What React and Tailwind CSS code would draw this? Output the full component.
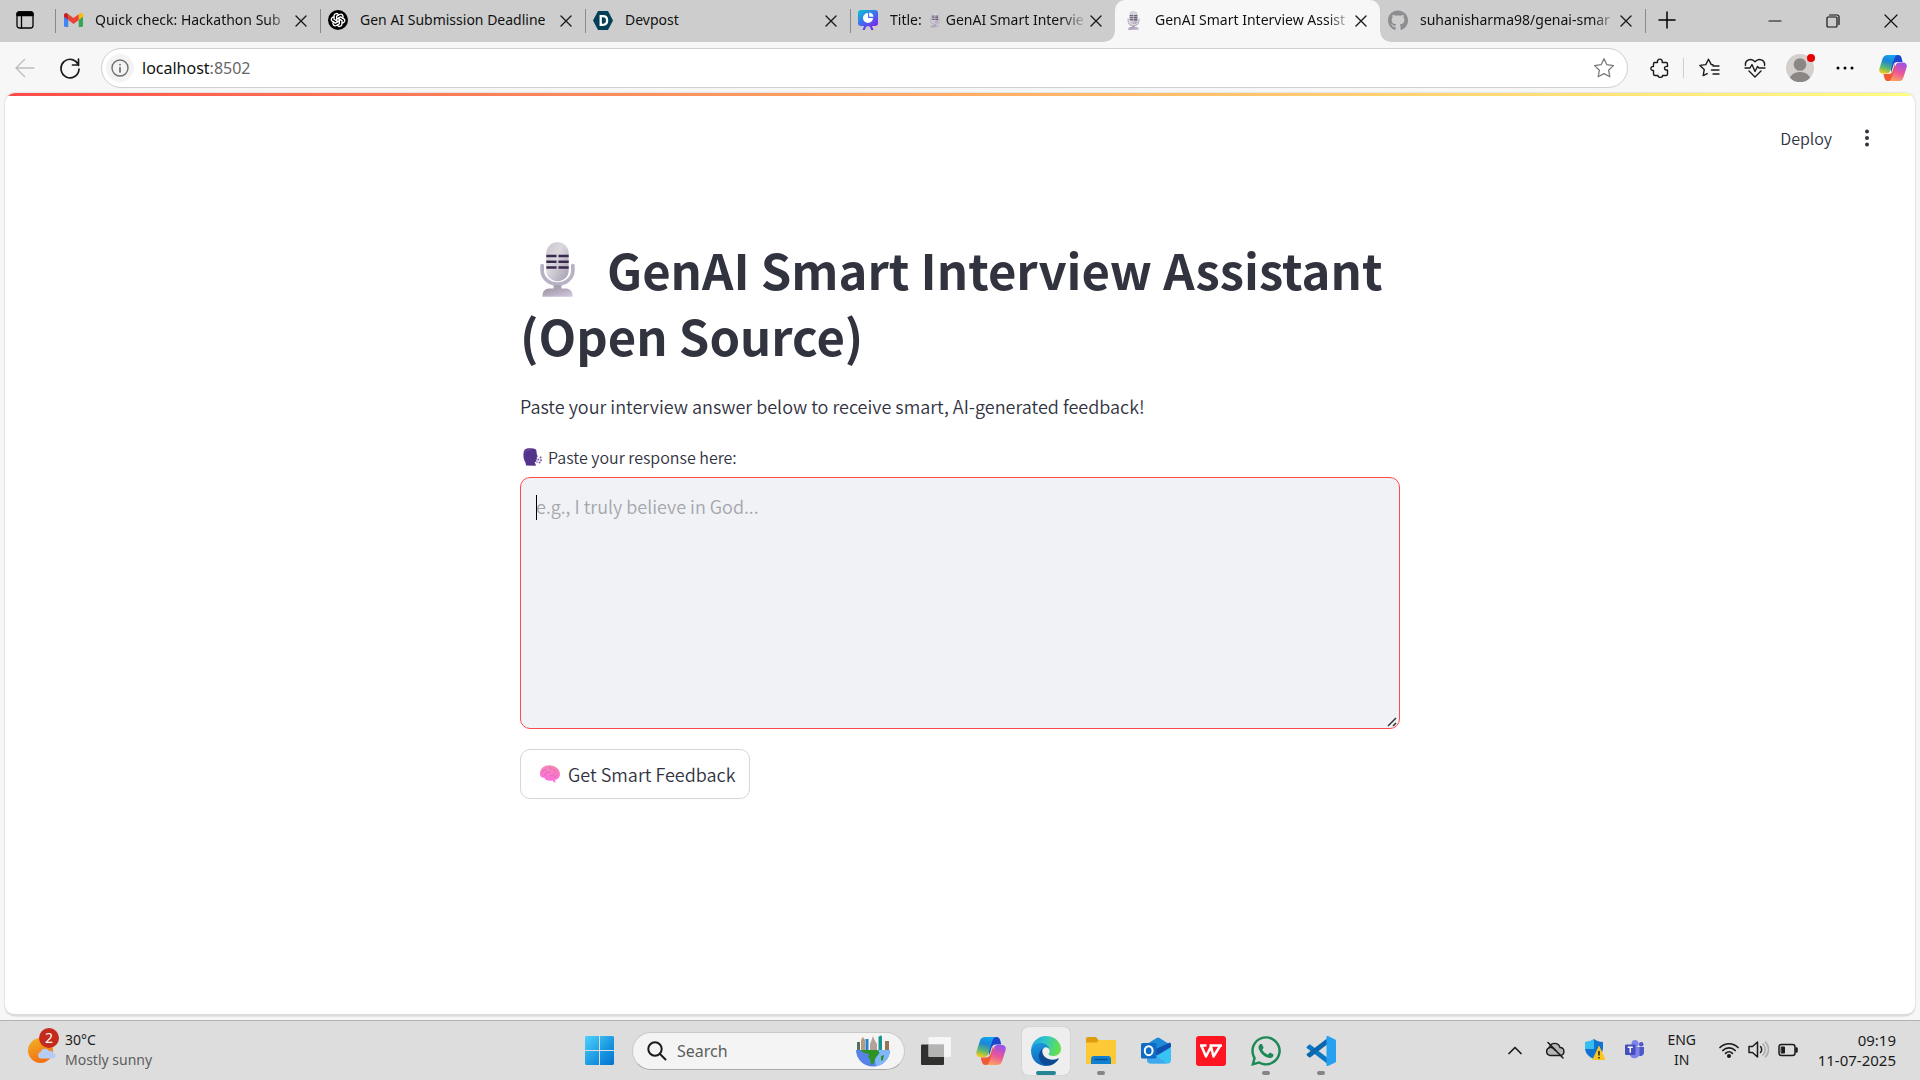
import { useId } from "react";
import { FaGithub, FaWhatsapp } from "react-icons/fa";
import { TbBrandOpenai } from "react-icons/tb";

function Line({ d, size = 20, box = 20, width = 1.3, className = "", children }) {
  return (
    <svg width={size} height={size} viewBox={`0 0 ${box} ${box}`} fill="none" stroke="currentColor" strokeWidth={width} strokeLinecap="round" strokeLinejoin="round" className={`shrink-0 ${className}`} aria-hidden="true">
      {d && <path d={d} />}
      {children}
    </svg>
  );
}

function Microphone({ className }) {
  const id = useId();
  return (
    <svg viewBox="0 0 36 56" className={`shrink-0 ${className}`} aria-hidden="true">
      <defs>
        <linearGradient id={`${id}b`} x1="0" y1="0" x2="1" y2="1">
          <stop offset="0" stopColor="#c9c4cd" />
          <stop offset=".4" stopColor="#dcd8de" />
          <stop offset="1" stopColor="#a59cb0" />
        </linearGradient>
        <linearGradient id={`${id}f`} x1="0" y1="0" x2="1" y2="1">
          <stop offset="0" stopColor="#9d94a3" />
          <stop offset="1" stopColor="#d5c8df" />
        </linearGradient>
      </defs>
      <path d="M2.2 24v5a15.8 14 0 0 0 31.6 0v-5" fill="none" stroke="#b9b2c4" strokeWidth="3.8" strokeLinecap="round" />
      <path d="M14 44h8v5h-8z" fill="#a9a2af" />
      <path d="M2.500 56c0-6 2.500-8.500 8-8.500h15c5.500 0 8 2.500 8 8.500z" fill={`url(#${id}f)`} />
      <rect x="6.500" y="0" width="23" height="40" rx="11" fill={`url(#${id}b)`} />
      <path d="M6.500 14h10.500M19 14h10.500M6.500 20h10.500M19 20h10.500M6.500 26h10.500M19 26h10.500" stroke="#3b2a50" strokeWidth="2.600" />
    </svg>
  );
}

function SpeakingHead() {
  return (
    <svg width="19" height="18" viewBox="0 0 19 18" className="shrink-0" aria-hidden="true">
      <path d="M1 3C2 .8 4 .3 7 .3c4 0 6.500.8 6.500 3 0 2 .3 3 1 4.500.5 1.200-.5 1.400-.8 1.600.3 1 .2 1.800-.2 2.500-.2 1.500-.8 2-1.800 2.200.2 1 .8 1.800 1.300 3.700L3 17.400C3 14 1 13 .6 9.500.3 7 .4 4.500 1 3z" fill="#54348a" />
      <path d="M2 4.500C3 2 6 1.500 8 2" stroke="#7651ae" fill="none" />
      <g fill="#7a5bb0">
        <circle cx="15.300" cy="11.500" r="1" /><circle cx="17.600" cy="9.500" r="1" /><circle cx="18" cy="12.300" r="1" /><circle cx="16.500" cy="14.500" r="1" /><circle cx="14" cy="14" r=".8" />
      </g>
    </svg>
  );
}

function Brain() {
  const id = useId();
  return (
    <svg width="20" height="18" viewBox="0 0 20 18" className="shrink-0" aria-hidden="true">
      <defs>
        <linearGradient id={id} x1=".6" y1="0" x2=".4" y2="1">
          <stop offset="0" stopColor="#f28ab0" />
          <stop offset="1" stopColor="#ff6de4" />
        </linearGradient>
      </defs>
      <path d="M0 9C0 3.500 4 .3 9.500.3S20 4 20 9c0 3.500-2.300 5.500-5 6l.6 2.600-2-.3-.8-1.800C8 16.500 5 15 4.500 12.800 1.500 13 0 11.500 0 9z" fill={`url(#${id})`} />
      <path d="M2 7c1-2 3-2.500 4-2M5 10.500c0-3 3-4 5-3M9 2.500c1.500 0 2 1 2 2M13 4.500c2 0 3 1.500 3 3M10 10.500c2 1 4 0 4-1.500M17 10c-.5 1.500-2 2-3 2" fill="none" stroke="#e05cb0" strokeWidth=".8" strokeLinecap="round" />
    </svg>
  );
}

function Copilot({ size }) {
  const id = useId();
  const half = "M9.500 1H20c-2.200.4-3.200 2.200-4 5l-3.400 11c-.8 2.600-2 4-4.500 4H4.200C.800 21-.300 18.500.500 15.500L3.800 5.200C4.700 2.300 6.300 1 9.500 1z";
  const fold = "M15 1h5.500c2 0 3 1 3.600 3L25.300 8.500H20c-2.600 0-3.900 1.200-4.600 3.500L13 20l-.5-8z";
  return (
    <svg width={size} height={size} viewBox="0 0 30 30" className="shrink-0" aria-hidden="true">
      <defs>
        <linearGradient id={`${id}a`} x1=".6" y1="0" x2=".3" y2="1">
          <stop offset="0" stopColor="#12a5f0" /><stop offset=".35" stopColor="#1b86d8" /><stop offset=".7" stopColor="#5bb873" /><stop offset="1" stopColor="#f2cb1a" />
        </linearGradient>
        <linearGradient id={`${id}b`} x1=".6" y1="0" x2=".3" y2="1">
          <stop offset="0" stopColor="#9a52e8" /><stop offset=".5" stopColor="#e9559c" /><stop offset="1" stopColor="#ffa35e" />
        </linearGradient>
      </defs>
      <path d={fold} fill="#1b46cf" />
      <path d={fold} transform="rotate(180 15 15)" fill="#f05a35" />
      <path d={half} fill={`url(#${id}a)`} />
      <path d="M20.500 29H10c2.200-.4 3.200-2.200 4-5l3.400-11c.8-2.600 2-4 4.500-4h3.900c3.400 0 4.500 2.500 3.700 5.500l-3.300 10.300c-.9 2.900-2.500 4.200-5.700 4.200z" fill={`url(#${id}b)`} />
    </svg>
  );
}

function Gmail() {
  return (
    <svg width="19" height="14" viewBox="0 0 19 14" className="shrink-0" aria-hidden="true">
      <path d="M0 3v9.800C0 13.500.5 14 1.200 14H4.300V5z" fill="#4285f4" />
      <path d="M19 3v9.800c0 .7-.5 1.200-1.200 1.200h-3.100V5z" fill="#34a853" />
      <path d="M14.700 1.200V7L19 3.700V2c0-1.700-1.900-2.600-3.300-1.600z" fill="#fbbc04" />
      <path d="M4.300 7V1.200L9.500 5l5.200-3.800V7L9.500 11z" fill="#ea4335" />
      <path d="M0 2v1.700L4.300 7V1.200L3.300.4C1.900-.6 0 .3 0 2z" fill="#c5221f" />
    </svg>
  );
}

function Devpost() {
  return (
    <svg width="20" height="19" viewBox="0 0 20 19" className="shrink-0" aria-hidden="true">
      <path d="M5 0h10l5 9.500L15 19H5L0 9.500z" fill="#033f56" />
      <path d="M7.700 5.200h2.200c2.800 0 4.200 1.600 4.200 4.300s-1.400 4.300-4.200 4.300H7.700z" fill="none" stroke="#fff" strokeWidth="2.300" />
    </svg>
  );
}

function Slides() {
  const id = useId();
  return (
    <svg width="20" height="20" viewBox="0 0 20 20" className="shrink-0" aria-hidden="true">
      <defs>
        <linearGradient id={id} x1="0" y1="0" x2=".7" y2="1">
          <stop offset="0" stopColor="#08c5cf" /><stop offset=".5" stopColor="#3a72f0" /><stop offset="1" stopColor="#8420ec" />
        </linearGradient>
      </defs>
      <path d="M3 0h14a3 3 0 0 1 3 3v10a3 3 0 0 1-3 3h-3l1.500 4h-2.300L12 17l-2-1-2 1-1.200 3H4.500L6 16H3a3 3 0 0 1-3-3V3a3 3 0 0 1 3-3z" fill={`url(#${id})`} />
      <path d="M10 3a5 5 0 1 0 5 5h-5z" fill="#fff" />
      <path d="M11.200 2.500a5 5 0 0 1 4.300 4.300h-4.300z" fill="#fff" />
    </svg>
  );
}

function Edge() {
  const id = useId();
  return (
    <svg width="30" height="30" viewBox="0 0 256 256" className="shrink-0" aria-hidden="true">
      <defs>
        <linearGradient id={`${id}a`} x1="0" y1="0" x2="1" y2=".2">
          <stop offset="0" stopColor="#1d9fe0" /><stop offset=".5" stopColor="#30c5cb" /><stop offset="1" stopColor="#63e04d" />
        </linearGradient>
        <linearGradient id={`${id}b`} x1=".2" y1="0" x2=".5" y2="1">
          <stop offset="0" stopColor="#1b9de2" /><stop offset="1" stopColor="#0f63b8" />
        </linearGradient>
      </defs>
      <path d="M231 190.500a93.700 93.700 0 0 1-10.500 4.700 101.900 101.900 0 0 1-35.900 6.500c-47.300 0-88.500-32.600-88.500-74.300a31.500 31.500 0 0 1 16.400-27.300c-42.800 1.800-53.800 46.400-53.800 72.500 0 73.900 68.100 81.400 82.800 81.400 7.900 0 19.800-2.300 27-4.600l1.300-.4a128.300 128.300 0 0 0 66.600-52.800 4 4 0 0 0-5.400-5.700z" fill="#0e4a94" />
      <path d="M105.700 241.400A79.200 79.200 0 0 1 83 220.100a80.700 80.700 0 0 1 29.500-120c3.100-1.500 8.500-4.100 15.500-4a32.400 32.400 0 0 1 25.700 13 31.900 31.900 0 0 1 6.400 18.700c0-.2 24.500-79.600-80-79.600-43.900 0-80 41.700-80 78.200a130.200 130.200 0 0 0 12.100 56 128 128 0 0 0 156.400 67.100 75.600 75.600 0 0 1-62.800-8z" fill={`url(#${id}b)`} />
      <path d="M152.300 148.900c-.8 1-3.300 2.500-3.300 5.600 0 2.600 1.700 5.100 4.700 7.300 14.400 10 41.500 8.700 41.600 8.700a59.600 59.600 0 0 0 30.300-8.400 61.400 61.400 0 0 0 30.400-52.900c.3-22.400-8-37.300-11.300-43.900C223.500 23.800 177.700 0 128 0A128 128 0 0 0 0 126.200c.5-36.500 36.800-66 80-66 3.500 0 23.500.3 42 10 16.300 8.600 24.900 19 30.900 29.200 6.100 10.700 7.200 24.200 7.200 29.500s-2.700 13.300-7.800 20z" fill={`url(#${id}a)`} />
    </svg>
  );
}

function Folder() {
  return (
    <svg width="30" height="27" viewBox="0 0 30 27" className="shrink-0" aria-hidden="true">
      <path d="M0 2C0 .8.8 0 2 0h7c1 0 1.500.5 2 1.200L12.500 3H28c1 0 2 .8 2 2v4H0z" fill="#dd9d10" />
      <path d="M0 5.500h10.500L13 3h17v23c0 .6-.4 1-1 1H1c-.6 0-1-.4-1-1z" fill="#fdc934" />
      <path d="M5 27v-5a3 3 0 0 1 3-3h14a3 3 0 0 1 3 3v5z" fill="#1280d2" />
      <path d="M9 22.500h12" stroke="#0a4f93" strokeWidth="1.300" strokeLinecap="round" />
    </svg>
  );
}

function Outlook() {
  return (
    <svg width="30" height="27" viewBox="0 0 30 27" className="shrink-0" aria-hidden="true">
      <path d="M6 7 16 .700a2 2 0 0 1 2 0L29 7.500V12L17 19 6 14z" fill="#1d8ad8" />
      <path d="M30 10v13a3.500 3.500 0 0 1-3.500 3.500H9.500L8 24z" fill="#37c3f4" />
      <path d="M6 12l20 14.500H9.500A3.500 3.500 0 0 1 6 23z" fill="#3fa9ec" />
      <path d="M15 12 29 5.500c1 .5 1 2 1 4.500L15 18.500z" fill="#1050b0" />
      <rect x="0" y="6" width="15.500" height="15.500" rx="1.500" fill="#0f6cc4" />
      <ellipse cx="7.700" cy="13.700" rx="3.900" ry="4.500" fill="none" stroke="#fff" strokeWidth="2" />
    </svg>
  );
}

function Wps() {
  return (
    <svg width="30" height="30" viewBox="0 0 30 30" className="shrink-0" aria-hidden="true">
      <rect width="30" height="30" rx="3" fill="#fd1522" />
      <path d="M4 9.500h6.500M5.500 10l4.500 10.500 5-10 2.500 10L24 10M13.500 9.500H26" fill="none" stroke="#fff" strokeWidth="2.500" strokeLinejoin="round" />
    </svg>
  );
}

function Code() {
  return (
    <svg width="30" height="30" viewBox="0 0 30 30" className="shrink-0" aria-hidden="true">
      <path d="M1 10.500 3 8.800c.5-.4 1-.4 1.500 0L23 23v6L1 12.300c-.6-.5-.6-1.200 0-1.800z" fill="#0d78c2" />
      <path d="M1 19.500 3 21.200c.5.400 1 .4 1.500 0L23 7V1L1 17.700c-.6.500-.6 1.200 0 1.800z" fill="#0a66ad" />
      <path d="M20.500 30V0c.5-.2 1-.2 1.500 0l6.700 3.200c.8.400 1.300 1.100 1.300 2v19.600c0 .9-.5 1.600-1.300 2L22 30c-.5.100-1 .1-1.500 0z" fill="#26a1f2" />
    </svg>
  );
}

function Windows() {
  const id = useId();
  return (
    <svg width="29" height="29" viewBox="0 0 29 29" className="shrink-0" aria-hidden="true">
      <defs>
        <linearGradient id={id} gradientUnits="userSpaceOnUse" x1="0" y1="0" x2="29" y2="29">
          <stop offset="0" stopColor="#4fd3fb" /><stop offset=".6" stopColor="#1795e0" /><stop offset="1" stopColor="#0672d2" />
        </linearGradient>
      </defs>
      <path d="M1 0h13v14H0V1zM15 0h13l1 1v13H15zM0 15h14v14H1l-1-1zM15 15h14v13l-1 1H15z" fill={`url(#${id})`} />
    </svg>
  );
}

function CityGlobe() {
  return (
    <svg width="34" height="32" viewBox="0 0 34 32" className="shrink-0" aria-hidden="true">
      <path d="M1 7h3v9H1z" fill="#53705e" />
      <path d="M5 5l2-3 2 3v11H5z" fill="#b59a80" />
      <path d="M9.500 4h3v12h-3z" fill="#2684cf" />
      <path d="M14 9l2-5 1-3 1 3 3 5v7h-7z" fill="#b5a198" />
      <path d="M22.500 2c2-2 3-2 3.500 0v14h-3.500z" fill="#199590" />
      <path d="M29 6h4v10h-4z" fill="#96735a" />
      <path d="M0 15h34a17 16.500 0 0 1-34 0z" fill="#5783e8" />
      <path d="M17 15h17a17 16.500 0 0 1-14 16z" fill="#7fb7fa" />
      <path d="M4 15h18l1.500 3-4 5-1.500 5-2.500 2-1.500-6-2-2 1-3-5-1z" fill="#2f9225" />
      <path d="M25 21l3-1-1 5-2 1z" fill="#2f9225" />
    </svg>
  );
}

function TaskView() {
  return (
    <svg width="30" height="28" viewBox="0 0 30 28" className="shrink-0" aria-hidden="true">
      <rect y="7.500" width="23" height="20.500" rx="1" fill="#30302e" />
      <rect x="7.500" width="22.500" height="20" rx="1" fill="#fff" fillOpacity=".72" />
      <path d="M7.500 7.500H23V20H8.500a1 1 0 0 1-1-1z" fill="#b4b4b2" />
    </svg>
  );
}

function Weather() {
  const id = useId();
  return (
    <svg width="28" height="26" viewBox="0 0 28 26" aria-hidden="true">
      <defs>
        <linearGradient id={id} x1="0" y1="0" x2=".4" y2="1">
          <stop offset="0" stopColor="#f0b429" /><stop offset="1" stopColor="#f37012" />
        </linearGradient>
      </defs>
      <circle cx="12.500" cy="12.500" r="12.500" fill={`url(#${id})`} />
      <path d="M13 20.500a3.300 3.300 0 0 1-.3-6.500c.8-3.500 6.500-4.500 8.300-.8 2-1 3.200 0 3.400 1.200 4.200.4 4 6.100.3 6.100z" fill="#b5cdf6" />
    </svg>
  );
}

function Shield() {
  return (
    <svg width="20" height="21" viewBox="0 0 20 21" className="shrink-0" aria-hidden="true">
      <path d="M9 0c2.500 2 5.500 3 9 3v6c0 5-4 9-9 11C4 18 0 14 0 9V3c3.500 0 6.500-1 9-3z" fill="#1173cf" />
      <path d="M9 0v10H0V3c3.500 0 6.500-1 9-3z" fill="#35bdf0" />
      <path d="M14 7.500 20 20.500H8z" fill="#fcc41c" stroke="#fcc41c" strokeLinejoin="round" />
      <path d="M14 12v4.500M14 18v1.500" stroke="#222" strokeWidth="1.500" />
    </svg>
  );
}

function Teams() {
  return (
    <svg width="19" height="19" viewBox="0 0 19 19" className="shrink-0" aria-hidden="true">
      <circle cx="10" cy="3.500" r="3.500" fill="#7b83eb" />
      <circle cx="16.200" cy="4.200" r="2.300" fill="#5059c9" />
      <path d="M13 7h6v6a3.500 3.500 0 0 1-6 2z" fill="#5059c9" />
      <path d="M5 7h9.500v6.500a5 5 0 0 1-9.500 2z" fill="#7b83eb" />
      <rect y="4.500" width="10.500" height="10.500" rx="1" fill="#444ebd" />
      <path d="M2.700 7.300h5.100M5.250 7.300v5.500" stroke="#fff" strokeWidth="1.400" />
    </svg>
  );
}

function Favicon({ kind }) {
  if (kind === "gmail") return <Gmail />;
  if (kind === "openai")
    return (
      <span className="flex size-5 items-center justify-center rounded-full bg-black text-white">
        <TbBrandOpenai size={16} />
      </span>
    );
  if (kind === "devpost") return <Devpost />;
  if (kind === "slides") return <Slides />;
  if (kind === "github") return <FaGithub size={21} color="#8b8d90" />;
  return <Microphone className="h-[19px] w-[13px]" />;
}

const tabs = [
  { kind: "gmail", title: "Quick check: Hackathon Sub", faded: true },
  { kind: "openai", title: "Gen AI Submission Deadline" },
  { kind: "devpost", title: "Devpost" },
  { kind: "slides", title: "GenAI Smart Intervie", prefix: "Title:", faded: true },
  { kind: "mic", title: "GenAI Smart Interview Assist", active: true, faded: true },
  { kind: "github", title: "suhanisharma98/genai-smar", faded: true },
];

function Tab({ kind, title, prefix, active, faded }) {
  return (
    <div className={`relative flex h-full max-w-[265px] min-w-0 flex-1 items-center ${active ? "rounded-t-[10px] bg-[#f7f7f7]" : ""}`}>
      {active ? (
        <>
          <span className="absolute bottom-0 -left-2.5 size-2.5 bg-[radial-gradient(circle_at_0_0,#cdcdcd_9px,#f7f7f7_10px)]" />
          <span className="absolute -right-2.5 bottom-0 size-2.5 bg-[radial-gradient(circle_at_100%_0,#cdcdcd_9px,#f7f7f7_10px)]" />
        </>
      ) : null}
      <button role="tab" aria-selected={!!active} className="flex h-full min-w-0 flex-1 items-center pb-0.5 pl-2">
        <span className="flex w-5 shrink-0 justify-center"><Favicon kind={kind} /></span>
        <span className={`ml-3 flex min-w-0 flex-1 items-center gap-1.5 text-left text-sm leading-5 whitespace-nowrap text-[#111] ${faded ? "[mask-image:linear-gradient(to_right,#000_87%,transparent)]" : ""}`}>
          {prefix && <span>{prefix}</span>}
          {prefix && <Microphone className="ml-0.5 h-4 w-2.5" />}
          <span>{title}</span>
        </span>
      </button>
      <button aria-label={`Close ${title}`} className="mr-3 flex size-[15px] items-center justify-center text-[#1b1b1b]">
        <Line d="M1 1l10 10M11 1 1 11" size={12} box={12} width={1.400} />
      </button>
    </div>
  );
}

function TabBar() {
  return (
    <div className="flex h-[42px] items-center bg-[#cdcdcd]">
      <button aria-label="Tab actions" className="flex h-full w-[55px] shrink-0 items-center pb-0.5 pl-4">
        <Line size={18} box={18}>
          <rect x="1" y="1" width="16" height="16" rx="2.500" />
          <path d="M1 4.500V3a2 2 0 0 1 2-2h12a2 2 0 0 1 2 2v1.500z" fill="currentColor" />
          <path d="M5.500 5v12" />
        </Line>
      </button>
      <div role="tablist" className="flex h-full min-w-0 flex-1">
        {tabs.map((tab, i) => (
          <div key={tab.title} className="contents">
            {i < 4 && <span className="-mr-px h-6 w-px shrink-0 self-center bg-[#8a8a8a]" />}
            <Tab {...tab} />
          </div>
        ))}
        <span className="h-6 w-px shrink-0 self-center bg-[#8a8a8a]" />
        <button aria-label="New tab" className="flex w-[42px] items-center justify-center pb-0.5">
          <Line d="M9 1v16M1 9h16" size={18} box={18} width={1.500} />
        </button>
      </div>
      <div className="flex h-full shrink-0 text-[#111]">
        <button aria-label="Minimize" className="flex w-[58px] items-center justify-center"><Line d="M1 7h12" size={14} box={14} width={1.200} /></button>
        <button aria-label="Restore" className="flex w-[58px] items-center justify-center">
          <Line size={14} box={14} width={1.200}><rect x="1" y="3" width="10" height="10" rx="1" /><path d="M3.500 1H11a2 2 0 0 1 2 2v7.500" /></Line>
        </button>
        <button aria-label="Close window" className="flex w-[58px] items-center justify-center"><Line d="M1 1l12 12M13 1 1 13" size={14} box={14} width={1.200} /></button>
      </div>
    </div>
  );
}

const star = "M10 1.500l2.600 5.500 6 .8-4.400 4.200 1.100 6L10 15.100 4.700 18l1.100-6L1.400 7.800l6-.8z";

function Toolbar() {
  return (
    <div className="flex h-[51px] items-center pt-px text-[#1b1b1b]">
      <button aria-label="Back" disabled className="ml-[15px] text-[#bdbdbd]"><Line d="M19 10H1M9.500 1.500 1 10l8.500 8.500" width={1.400} /></button>
      <button aria-label="Refresh" className="ml-6">
        <Line size={22} box={22} width={1.700} d="M19.500 8.500A9 9.300 0 1 0 20 12M19.500 2v6h-6" />
      </button>
      <div className="ml-5 flex h-10 flex-1 items-center rounded-full border border-[#cfcfcf] bg-white">
        <button aria-label="Site information" className="ml-1 flex size-7 items-center justify-center rounded-full bg-[#f3f3f3] text-[#707070]">
          <Line size={18} box={18} width={1.400}><circle cx="9" cy="9" r="8" /><path d="M9 8.500V13M9 5.500v.2" strokeWidth="1.700" /></Line>
        </button>
        <div className="relative ml-2 flex-1">
          <input aria-label="Address" defaultValue="localhost:8502" className="w-full bg-transparent text-base leading-6 text-[#686868] outline-none" />
          <span aria-hidden="true" className="pointer-events-none absolute top-0 left-0 bg-white text-base leading-6 text-[#111]">localhost</span>
        </div>
        <button aria-label="Add to favorites" className="mr-3 text-[#777]"><Line d={star} size={22} width={1.100} /></button>
      </div>
      <div className="flex shrink-0 items-center">
        <button aria-label="Extensions" className="ml-[22px]">
          <Line size={20} width={1.400} d="M4 4.500h3.500c-.8-4.500 5.500-4.500 4.700 0H16a1.500 1.500 0 0 1 1.500 1.500v2.500c-4-.9-4 4.200 0 3.500V16a1.500 1.500 0 0 1-1.500 1.500h-3.500c.8 2.500-5 2.500-4.500 0H5A1.500 1.500 0 0 1 3.500 16v-3.500c-3.500.5-3.500-4.600 0-4V6z" />
        </button>
        <span className="mr-[15px] ml-[13px] h-5 w-px bg-[#cfcfcf]" />
        <button aria-label="Favorites">
          <Line size={21} box={21} width={1.400} d="M14 6.800l-1.700-.2L9.500 1.200 6.800 6.600l-5.900.8 4.300 4.200-1 6 4-2M14 8h6M12.500 12H20M14 16h6" />
        </button>
        <button aria-label="Browser essentials" className="ml-6">
          <Line size={22} box={22} width={1.400} d="M1.500 8.500C.500 2.500 7.500.5 11 4.800c3.500-4.300 10.500-2.300 9.500 3.700M1 11h5l2-3.500 3 7 2.500-5 1.500 1.500h6M5 14l6 6 6-6" />
        </button>
        <button aria-label="Profile" className="relative ml-5 size-7">
          <svg viewBox="0 0 28 28" className="size-7" aria-hidden="true">
            <circle cx="14" cy="14" r="14" fill="#d2cfcc" /><circle cx="14" cy="10.500" r="6.300" fill="#8b8785" /><path d="M4 24c2.500-8 17.500-8 20 0a14 14 0 0 1-20 0z" fill="#8b8785" />
          </svg>
          <span className="absolute -right-px top-0 size-2 rounded-full bg-[#e60000]" />
        </button>
        <button aria-label="Settings and more" className="ml-[22px]">
          <svg width="18" height="4" viewBox="0 0 18 4" aria-hidden="true"><circle cx="2" cy="2" r="1.500" /><circle cx="9" cy="2" r="1.500" /><circle cx="16" cy="2" r="1.500" /></svg>
        </button>
        <button aria-label="Copilot" className="mr-[13px] ml-[25px]"><Copilot size={28} /></button>
      </div>
    </div>
  );
}

function AppPage() {
  return (
    <main className="mx-[5px] flex flex-1 flex-col overflow-hidden rounded-[10px] border-b-2 border-[#dcdcdc] bg-white font-['Noto_Sans_CJK_SC',sans-serif] font-[350] text-[#31333f] shadow-[0_0_2px_#bbb]">
      <div className="h-[3px] shrink-0 bg-linear-to-r from-[#ff4b4b] to-[#fffd80]" />
      <header className="flex items-center justify-end pt-7 pr-[38px]">
        <button className="text-base leading-7">Deploy</button>
        <button aria-label="Main menu" className="ml-[25px] flex h-7 w-5 items-center justify-center">
          <svg width="4" height="18" viewBox="0 0 4 18" fill="#31333f" aria-hidden="true"><circle cx="2" cy="2.500" r="2" /><circle cx="2" cy="9" r="2" /><circle cx="2" cy="15.500" r="2" /></svg>
        </button>
      </header>
      <section className="mx-auto mt-[84px] w-full max-w-[880px]">
        <h1 className="text-[49px] leading-[66px] font-bold">
          <Microphone className="mr-8 ml-5 inline-block h-[55px] w-[35px] align-[-7px]" />
          GenAI Smart Interview Assistant (Open Source)
        </h1>
        <p className="mt-[22px] text-[18px] leading-8">Paste your interview answer below to receive smart, AI-generated feedback!</p>
        <form onSubmit={(e) => e.preventDefault()}>
          <label htmlFor="answer" className="mt-[21px] flex items-center gap-1.5 pl-[3px] text-base leading-7">
            <SpeakingHead />
            Paste your response here:
          </label>
          <div className="relative mt-1.5 flex">
            <textarea id="answer" placeholder="e.g., I truly believe in God..." className="h-[252px] w-full resize-none rounded-[10px] border border-[#ff4b4b] bg-[#f0f2f6] px-[15px] py-3 text-[18px] leading-8 outline-none placeholder:text-[#a5a6ac]" />
            <span className="absolute top-[18px] left-4 h-[25px] w-px bg-black" />
            <svg width="10" height="10" viewBox="0 0 10 10" className="absolute right-[3px] bottom-[2px]" aria-hidden="true"><path d="M1 9l8-8M6 9l3-3" stroke="#333" strokeWidth="1.500" /></svg>
          </div>
          <button className="mt-5 flex h-[50px] items-center gap-2 rounded-[10px] border border-[#d6d6d9] pr-3.5 pl-[19px] text-[18px] leading-8">
            <Brain />
            Get Smart Feedback
          </button>
        </form>
      </section>
    </main>
  );
}

const apps = [
  { name: "Task view", icon: <TaskView /> },
  { name: "Copilot", icon: <Copilot size={30} /> },
  { name: "Microsoft Edge", icon: <Edge />, active: true },
  { name: "File Explorer", icon: <Folder />, running: true },
  { name: "Outlook", icon: <Outlook /> },
  { name: "WPS Office", icon: <Wps /> },
  { name: "WhatsApp", icon: <FaWhatsapp size={34} color="#1c8a56" className="shrink-0" />, running: true },
  { name: "Visual Studio Code", icon: <Code />, running: true },
];

function Taskbar() {
  return (
    <footer className="mt-1 grid h-[60px] shrink-0 grid-cols-[1fr_auto_1fr] items-center border-t border-[#b2b2b2] bg-[#dddddd] text-[#1b1b1b]">
      <button className="flex items-center justify-self-start pb-0.5 pl-7 text-left">
        <span className="relative mr-2.5 h-6 w-[27px]">
          <Weather />
          <span className="absolute -top-2.5 left-[11px] flex size-5 items-center justify-center rounded-full bg-[#c42b1c] text-sm text-white">2</span>
        </span>
        <span className="text-sm leading-5">30°C<br /><span className="text-[#5d5d5d]">Mostly sunny</span></span>
      </button>
      <div className="flex items-center pl-2.5">
        <button aria-label="Start" className="mr-[18px]"><Windows /></button>
        <label className="flex h-[38px] w-[273px] items-center rounded-full border border-[#c9c9c9] border-b-[#aaa] bg-[#f4f4f4] px-3.5">
          <Line size={20} width={2} d="M13 13l5.500 5.500"><circle cx="8" cy="8" r="6.700" /></Line>
          <input aria-label="Search" placeholder="Search" className="ml-2.5 w-0 flex-1 bg-transparent text-base leading-6 outline-none placeholder:text-[#5d5d5d]" />
          <CityGlobe />
        </label>
        <div className="ml-[7px] flex gap-[7px]">
          {apps.map(({ name, icon, active, running }) => (
            <button key={name} aria-label={name} className={`relative flex size-12 items-center justify-center rounded-md ${active ? "bg-[#eeeeee] shadow-[0_0_1px_#999]" : ""}`}>
              {icon}
              {active && <span className="absolute bottom-0 left-3.5 h-1 w-5 rounded-full bg-[#248595]" />}
              {running && <span className="absolute bottom-0 left-5 h-1 w-2 rounded-full bg-[#858585]" />}
            </button>
          ))}
        </div>
      </div>
      <div className="flex items-center justify-self-end pr-6 pb-0.5 text-sm leading-5">
        <button aria-label="Hidden icons"><Line d="M1 10.500 7 4.500l6 6" size={14} box={14} width={1.700} /></button>
        <button aria-label="OneDrive offline" className="ml-[23px]">
          <Line size={20} width={1.400}>
            <path d="M5 15.500a4 4 0 0 1-.500-7.800C5.500 2 13.500 2 15 7.500c5 0 5.500 8 0 8z" fill="#b5b5b5" />
            <path d="M4 7.500c3-1 5 1 6.500 3" fill="none" /><path d="M3 2.500 18 18" strokeWidth="1.600" />
          </Line>
        </button>
        <button aria-label="Windows Security" className="ml-5"><Shield /></button>
        <button aria-label="Teams" className="ml-5"><Teams /></button>
        <button className="ml-[23px] w-[30px] text-center">ENG<br />IN</button>
        <button aria-label="Network, volume and battery" className="ml-[22px] flex items-center gap-[9px]">
          <Line size={20} width={1.700}><path d="M1 7.500c5-5 13-5 18 0M3.800 10.500c3.500-3.500 9-3.500 12.400 0M6.600 13.300c2-2 4.800-2 6.800 0" /><circle cx="10" cy="16" r="1.200" fill="currentColor" /></Line>
          <Line size={21} box={21} width={1.500}><path d="M1 7.500h3.500L9.500 3v15l-5-4.500H1z" /><path d="M12.500 7.500c1.500 1.500 1.500 4.500 0 6" /><path d="M15 5c3 3 3 8 0 11M17.500 3c4 4.500 4 10.500 0 15" stroke="#aaa" /></Line>
          <Line size={20} width={1.500}><rect x="1" y="4.500" width="16" height="11" rx="2.500" /><path d="M3.500 7h3v6h-3z" fill="currentColor" strokeWidth="1" /><path d="M18.500 8.500v3" strokeWidth="2.500" /></Line>
        </button>
        <button className="ml-5 text-right text-[15px]">09:19<br />11-07-2025</button>
      </div>
    </footer>
  );
}

export default function App() {
  return (
    <div className="flex min-h-screen flex-col bg-[#f7f7f7] font-['Noto_Sans',sans-serif]">
      <TabBar />
      <Toolbar />
      <AppPage />
      <Taskbar />
    </div>
  );
}
